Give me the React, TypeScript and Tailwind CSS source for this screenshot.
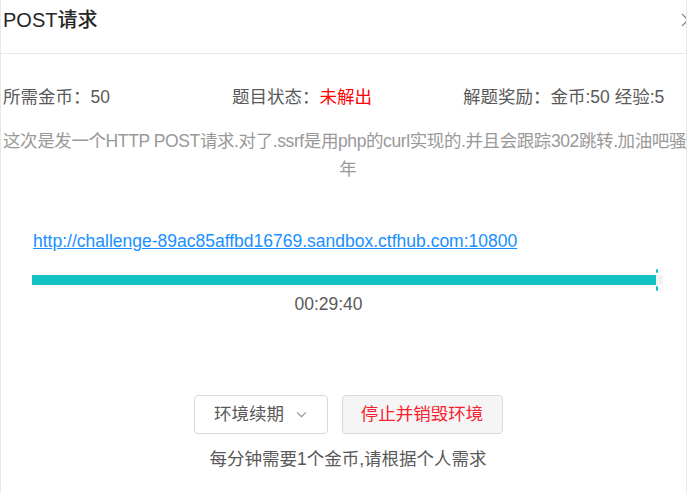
import React from "react";

export default function App() {
  const font = { fontFamily: '"Liberation Sans", "Noto Sans CJK SC", sans-serif' };
  return (
    <div
      className="relative w-[687px] h-[493px] overflow-hidden bg-white border-l border-r border-[#e8e8e8]"
      style={font}
    >
      {/* header */}
      <div className="h-[54px] border-b border-[#e8e8e8] pl-[2px] pt-[6px]">
        <div className="text-[20px] leading-[28px] font-medium text-[#262626]">POST请求</div>
      </div>
      <div className="absolute left-[680px] top-[13px] w-[14px] h-[14px]">
        <svg viewBox="0 0 14 14" className="w-[14px] h-[14px]" fill="none" stroke="#8c8c8c" strokeWidth="1.3">
          <path d="M1 1 L13 13 M13 1 L1 13" />
        </svg>
      </div>

      {/* info row */}
      <div className="mt-[29px] flex pl-[2px] text-[17.5px] leading-[28px] text-[#595959] whitespace-nowrap">
        <div className="w-[229px]">所需金币：50</div>
        <div className="w-[231px]">
          题目状态：<span className="text-[#ff0000]">未解出</span>
        </div>
        <div>解题奖励：金币:50 经验:5</div>
      </div>

      {/* description */}
      <div className="mt-[16px] w-[694px] text-[17.5px] leading-[28px] text-[#999999]">
        <div className="pl-[2px] whitespace-nowrap tracking-[-0.4px]">
          这次是发一个HTTP POST请求.对了.ssrf是用php的curl实现的.并且会跟踪302跳转.加油吧骚
        </div>
        <div className="text-center">年</div>
      </div>

      {/* link */}
      <div className="mt-[44px] pl-[32px] text-[17.5px] leading-[28px]">
        <a className="text-[#1890ff] underline" href="#">
          http://challenge-89ac85affbd16769.sandbox.ctfhub.com:10800
        </a>
      </div>

      {/* progress */}
      <div className="mt-[20px] pl-[31px]">
        <div className="relative w-[631px] h-[10px] bg-[#f2f2f2]">
          <div className="h-[10px] w-[624px] bg-[#13c2c2]" />
          <div className="absolute left-[624px] top-[-6px] w-[2px] h-[4px] bg-[#13c2c2] rounded-[1px]" />
          <div className="absolute left-[624px] top-[11px] w-[2px] h-[5px] bg-[#13c2c2] rounded-[1px]" />
        </div>
      </div>
      <div className="mt-[5px] w-[655px] text-center text-[17.5px] leading-[28px] text-[#595959]">
        00:29:40
      </div>

      {/* buttons */}
      <div className="mt-[77px] w-[694px] flex justify-center gap-[14px]">
        <button className="w-[134px] h-[39px] rounded-[4px] border border-[#d9d9d9] bg-white flex items-center justify-center gap-[12px] text-[17.5px] text-[#595959]">
          <span>环境续期</span>
          <svg viewBox="0 0 12 8" className="w-[11px] h-[7px]" fill="none" stroke="#8c8c8c" strokeWidth="1.2">
            <path d="M1 1.5 L6 6.5 L11 1.5" />
          </svg>
        </button>
        <button className="w-[161px] h-[39px] rounded-[4px] border border-[#d9d9d9] bg-[#f5f5f5] flex items-center justify-center text-[17.5px] text-[#f5222d]">
          停止并销毁环境
        </button>
      </div>
      <div className="mt-[11px] w-[694px] text-center text-[17.5px] leading-[28px] text-[#595959]">
        每分钟需要1个金币,请根据个人需求
      </div>
    </div>
  );
}
